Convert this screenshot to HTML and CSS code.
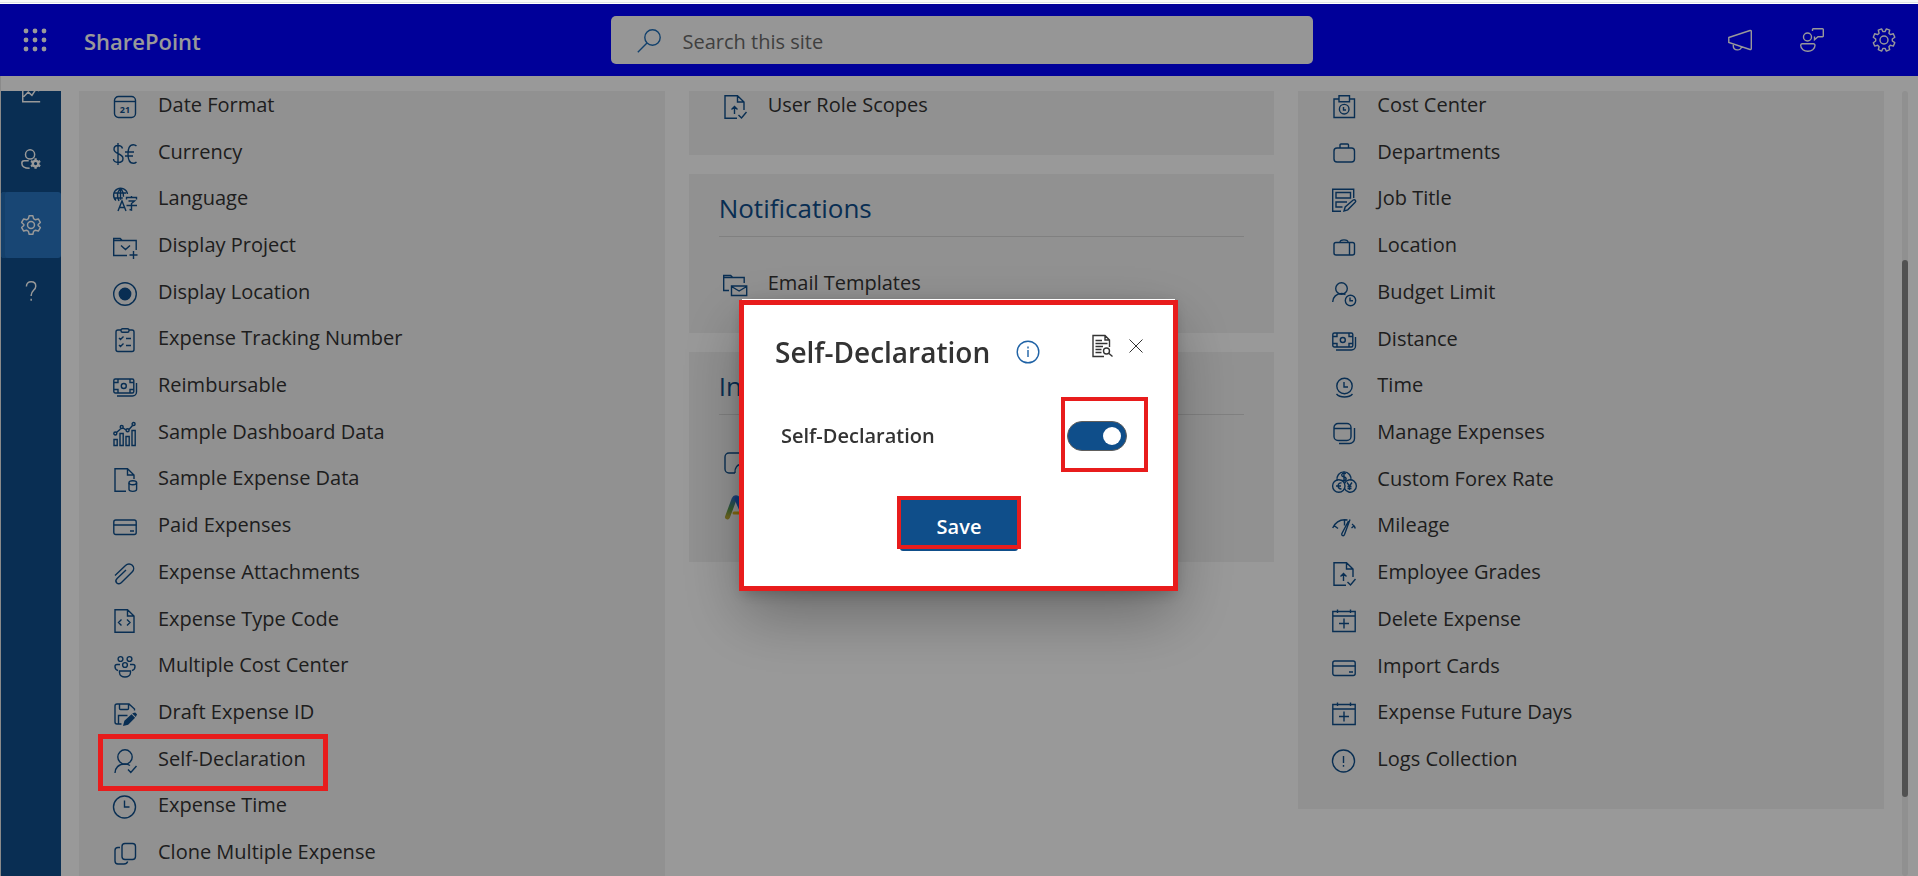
FILE: index.html
```
<!DOCTYPE html>
<html lang="en">
<head>
<meta charset="utf-8">
<title>SharePoint - Settings</title>
<link rel="stylesheet" href="styles.css">
</head>
<body>
<svg class="sprite" aria-hidden="true">
  <defs>
    <linearGradient id="leg" x1="0" y1="1" x2="0" y2="0"><stop offset="0" stop-color="#b8a832"/><stop offset=".4" stop-color="#5a9a4a"/><stop offset="1" stop-color="#2e70c8"/></linearGradient>
  </defs>
  <symbol id="currency" viewBox="0 0 24 24"><path d="M5 1v22M9.500 6.500C9 4.300 7 3.500 5 3.500c-2.500 0-4 1.500-4 3.800C1 12.500 10 11 10 16.500c0 2.500-2 4-5 4-2.500 0-4.500-1.500-4.500-3.500M23.500 4c-1-1-2-1.300-3.200-1.300-4 0-5.300 4-5.300 9.300s1.500 9.300 5.300 9.300c1.200 0 2.200-.3 3.200-1.300M12 10h9M12 14h8"/></symbol>
  <symbol id="language" viewBox="0 0 24 24"><path d="M3 12.500A7 7 0 1 1 14.500 6M1 5h12M.8 10h9M7.500.8v11M7.500.8C4 4 4 9 6 13M7.500.8c2.500 2 3 4 3 8M5 23l4-10 4 10M6.500 19.500h5M13.500 11.500V9.500h10v2M18.500 8v1.500M15.500 13h6l-3 2.500v6.500l-2-.5M13.500 17.500h10.500"/></symbol>
  <symbol id="project" viewBox="0 0 24 24"><path d="M14 20.500H.7V3.500h6.500l2 2h14V15M.7 5.500h8.500M8 10.500l4.500 4 4.500-4M20.500 16v8M16.500 20h8"/></symbol>
  <symbol id="radio" viewBox="0 0 24 24"><circle cx="12" cy="12" r="11.300"/><circle class="solid" cx="12" cy="12" r="5.700"/></symbol>
  <symbol id="checklist" viewBox="0 0 24 24"><path d="M8 2H5a2 2 0 0 0-2 2v17.500a2 2 0 0 0 2 2h14a2 2 0 0 0 2-2V4a2 2 0 0 0-2-2h-3"/><rect x="8" y=".7" width="8" height="3.500" rx="1.500"/><path d="M6 10l1.500 1.500L10.500 8.500M6 17l1.500 1.500 3-3M13 10.500h5M13 17.500h5"/></symbol>
  <symbol id="money" viewBox="0 0 24 24"><rect x=".8" y="4" width="20" height="14" rx="1.500"/><circle cx="10.800" cy="11" r="2.500"/><path d="M5 4v3.500H1M17 4v3.500h4M5 18v-3.500H1M17 18v-3.500h4M23.500 8v9a4 4 0 0 1-4 4H4"/></symbol>
  <symbol id="chart" viewBox="0 0 24 24"><path d="M1 17.500h3.200v6H1zM7 11.500h3.200v12H7zM13 14.500h3.200v9H13zM19 8.500h3.200v15H19zM3.500 10.500l4-3.500M10 6l3 1.800M16 7.500l3.500-4"/><circle cx="2.300" cy="11.500" r="1.500"/><circle cx="8.700" cy="5" r="1.500"/><circle cx="14.600" cy="8.300" r="1.500"/><circle cx="20.600" cy="2" r="1.500"/></symbol>
  <symbol id="docdata" viewBox="0 0 24 24"><path d="M13 23.300H2V.7h12.500L21 7v4M14.500.7V7H21"/><ellipse cx="19.800" cy="14.800" rx="3.800" ry="2"/><path d="M16 14.800v6.500c0 2.700 7.600 2.700 7.600 0v-6.500"/></symbol>
  <symbol id="card" viewBox="0 0 24 24"><rect x=".8" y="5" width="22.400" height="14.500" rx="2"/><path d="M.8 10h22.400M17 16h4"/></symbol>
  <symbol id="clip" viewBox="0 0 24 24"><path d="M2 13.500L12.500 3.500c2-2 5-2 6.800-.2 1.900 1.900 1.800 4.700-.2 6.700L8.500 20.500c-1.500 1.500-3.500 1.600-4.700.4-1.200-1.200-1.100-3.100.3-4.500L13 8"/></symbol>
  <symbol id="code" viewBox="0 0 24 24"><path d="M2 .7h12.500L21 7v16.300H2zM14.500.7V7H21M8.500 10.500l-3 3 3 3M14 10.500l3 3-3 3"/></symbol>
  <symbol id="people" viewBox="0 0 24 24"><circle cx="7.500" cy="4" r="2.400"/><circle cx="16.500" cy="4" r="2.400"/><circle cx="12" cy="10" r="2.400"/><path d="M6.500 16h11v1.500c0 6-11 6-11 0zM7 9.500H4a2 2 0 0 0-2 2c0 2 1 3.500 3 4M17 9.500h3a2 2 0 0 1 2 2c0 2-1 3.500-3 4"/></symbol>
  <symbol id="draft" viewBox="0 0 24 24"><path d="M8.500 22H4a2 2 0 0 1-2-2V4a2 2 0 0 1 2-2h12l5.500 5v1.500M6.500 2v4.500a1 1 0 0 0 1 1h7a1 1 0 0 0 1-1V2M5.500 22v-8.500h9"/><path class="solid" d="M11 23l1-3.800 6.500-6 2.600 2.600-6.300 6.200zM20.500 11.700l1.500-.5 1.200 1.200-.6 1.400z"/></symbol>
  <symbol id="selfdecl" viewBox="0 0 24 24"><circle cx="12" cy="8" r="7.200"/><path d="M2 24c0-5 3.500-9 10-9 2 0 3.500.5 5 1.500M15 20.500l2.800 3L23.500 17"/></symbol>
  <symbol id="clock" viewBox="0 0 24 24"><circle cx="11.500" cy="12" r="11"/><path d="M11.500 5.500V12h5"/></symbol>
  <symbol id="clone" viewBox="0 0 24 24"><rect x="9" y="1.500" width="13.500" height="16" rx="3"/><path d="M7 5.500H5a3 3 0 0 0-3 3V19a3 3 0 0 0 3 3h6c2 0 3.200-1 3.700-2.500"/></symbol>
  <symbol id="docup" viewBox="0 0 24 24"><path d="M14 23.300H2V.7h12.500L21 7v8M14.500.7V7H21M11.500 19v-7M8.500 14.500l3-3 3 3M15.500 20l3 3 5-6"/></symbol>
  <symbol id="mail" viewBox="0 0 24 24"><path d="M6 17.500H.7V2.500h7l2 2h11.500V10M.7 4.500h9"/><path d="M8.500 13h15.200v9.500H8.500zM8.500 13.500l7.600 4.500 7.600-4.500"/></symbol>
  <symbol id="note" viewBox="0 0 24 24"><path d="M22 11V6a4 4 0 0 0-4-4H6a4 4 0 0 0-4 4v12a4 4 0 0 0 4 4h6M12 22c-.5-5 2-9 8-9"/></symbol>
  <symbol id="brand" viewBox="0 0 28 28"><path class="brand-left" d="M4.500 24L11 6.500c1-2.500 3-2.500 4 0"/><path class="brand-right" d="M14 6l8 18"/><path class="brand-bar" d="M11 20h8"/></symbol>
  <symbol id="costcenter" viewBox="0 0 24 24"><path d="M6.500 4H2v18.500h20.500V4H18M7 .7h10.500v6H7z"/><circle cx="12.200" cy="14.200" r="4.800"/><path d="M11.500 12v3H14"/></symbol>
  <symbol id="bag" viewBox="0 0 24 24"><rect x="2" y="6" width="20.500" height="14" rx="3"/><path d="M8 6V3a1 1 0 0 1 1-1h6.500a1 1 0 0 1 1 1v3"/></symbol>
  <symbol id="job" viewBox="0 0 24 24"><path d="M9 23.300H.7V1.200h21V10M4 4.500h14.500V10H4zM15 14H4v5h6.500M12 23l1.200-4 8-7c1.500-1 3.500.8 2 2.300l-7.500 7.500z"/></symbol>
  <symbol id="case" viewBox="0 0 24 24"><rect x="2" y="7.500" width="20.500" height="12.500" rx="2"/><path d="M17.500 7.500V20M8 7.500C8 4 16 4 16 7.500"/></symbol>
  <symbol id="budget" viewBox="0 0 24 24"><circle cx="9.500" cy="6.500" r="5.800"/><path d="M.7 20c0-5 4-8.500 8.800-8.500 1.500 0 3 .5 4 1"/><circle cx="18.500" cy="18.500" r="5.200"/><path d="M18 15.500v3.300h3"/></symbol>
  <symbol id="time" viewBox="0 0 24 24"><circle cx="12.500" cy="11" r="7.700"/><path d="M12 7v5h4M4.500 19c3.500 4 12.500 4 16 0"/></symbol>
  <symbol id="manage" viewBox="0 0 24 24"><rect x="2" y="1.500" width="17" height="17" rx="4"/><path d="M2 6.500h17M22.500 6v10.500a5 5 0 0 1-5 5H7"/></symbol>
  <symbol id="forex" viewBox="0 0 24 24"><path d="M5.200 11.500a7 7 0 1 1 13.600 0"/><circle cx="6.800" cy="17" r="6.200"/><path d="M12.500 14.500a6.200 6.200 0 1 1 0 5M14 4.700c-3-1.500-5 .3-4 2.100.8 1.200 4 .8 4.200 3 .1 1.700-2.500 2.500-4.600 1.200M12 2.800v10M9.500 14c-4-1-5 5.500 0 6M4 17h5M15 13.500l2.500 3.500 2.500-3.500M17.500 17v4M15.500 17.500h4M15.500 19.500h4"/></symbol>
  <symbol id="mileage" viewBox="0 0 24 24"><path d="M.7 13C4 6 9 4 15.500 5M2 10.500l4 3M12.500 4.500v6M18 4.500l-5.500 15c-.8 2-3.300 1.200-2.700-.8L16.500 6M20 9c1.500 1 2.700 2.500 3.300 4.500M19.500 13l3-2.500"/></symbol>
  <symbol id="calplus" viewBox="0 0 24 24"><path d="M.8 2.500h22.400v20H.8zM.8 7h22.400M5.500.5V4M18.500.5V4M12 9.500v10M7 14.500h10"/></symbol>
  <symbol id="alert" viewBox="0 0 24 24"><circle cx="11.500" cy="12" r="11"/><path d="M11.500 7v7M11.500 16v1.800"/></symbol>
  <symbol id="trend" viewBox="0 0 24 24"><path d="M3 1v20.500h19M4 16l5-5 4 3.500 4-6 4 1"/></symbol>
  <symbol id="usergear" viewBox="0 0 24 24"><circle cx="11" cy="7" r="5"/><path d="M9.500 14H4.500a2.500 2.500 0 0 0-2.500 2.500c0 4 4 5.500 8.500 5.500"/><circle class="cog" cx="17" cy="17" r="3"/><path class="cog" d="M17 11.300v3M17 19.700v3M12 14.200l2.600 1.500M19.400 18.300l2.600 1.500M12 19.800l2.600-1.500M19.400 15.700l2.600-1.500"/></symbol>
  <symbol id="gear6" viewBox="0 0 24 24"><circle cx="12" cy="12" r="3.800"/><path stroke-linejoin="round" d="M10 1.800h4l.8 3.300 2 1.200 3.200-.9 2.200 3.800-2.400 2.200v1.200l2.400 2.200-2.200 3.800-3.200-.9-2 1.200-.8 3.300h-4l-.8-3.300-2-1.200-3.200.9-2.200-3.800 2.400-2.200v-1.200L1.800 9.200 4 5.400l3.200.9 2-1.200z"/></symbol>
  <symbol id="help" viewBox="0 0 24 24"><path d="M7 7c0-3 2-5 5.200-5 3 0 5 2 5 4.700 0 4.300-5 4.800-5 9.800v1M12.200 20.500v2"/></symbol>
  <symbol id="megaphone" viewBox="0 0 24 24"><path d="M.8 9.500L22 2.500c.8-.2 1.300.2 1.300 1v17c0 .8-.5 1.200-1.300 1L.8 14.500zM5.300 16v2c0 5 8 5 8 1"/></symbol>
  <symbol id="feedback" viewBox="0 0 24 24"><circle cx="7.500" cy="9" r="4"/><path d="M2 15.800h11.500a1.500 1.500 0 0 1 1.500 1.500c0 8-14.300 8-14.300 0A1.500 1.500 0 0 1 2 15.800zM12.500 3V1.500A.8.800 0 0 1 13.300.700h9.200a.8.800 0 0 1 .8.800V8a.8.800 0 0 1-.8.800H18l-3.500 3V8.500"/></symbol>
  <symbol id="gear8" viewBox="0 0 24 24"><circle cx="12" cy="12" r="4"/><path stroke-linejoin="round" d="M9.600.9l1.400 2.700h2L14.400.9l3.300 1.300-.8 3 1.400 1.400 3-.8 1.500 3.400L20.300 11v2l2.500 1.700-1.500 3.400-3-.8-1.400 1.400.8 3-3.300 1.400-1.400-2.700h-2l-1.400 2.700-3.300-1.400.8-3-1.400-1.400-3 .8-1.400-3.400L3.700 13v-2L1.300 9.200l1.400-3.400 3 .8 1.400-1.400-.8-3z"/></symbol>
  <symbol id="search" viewBox="0 0 24 24"><circle cx="15.500" cy="8.500" r="7.700"/><path d="M10 14L.8 23.200"/></symbol>
  <symbol id="info" viewBox="0 0 24 24"><circle cx="12" cy="12" r="10.800"/><path d="M12 10v7M12 6.500v2"/></symbol>
  <symbol id="docsearch" viewBox="0 0 24 24"><path d="M14 22.500H3V1.500h12L19.500 6v7M15 1.500V6h4.500M5.500 6.500H12M5.500 9.500h12M5.500 12.500H13M5.500 15.500h6M5.500 18.500h6"/><circle cx="16.500" cy="17" r="3"/><path d="M18.700 19.200l3.800 3.300"/></symbol>
  <symbol id="close" viewBox="0 0 14 14"><path d="M.5.5l13 13M13.500.5l-13 13"/></symbol>
</svg>

<div class="top-edge"></div>
<header class="suite">
  <div class="suite-brand">
    <button class="icon-btn" aria-label="App launcher"><svg class="waffle" viewBox="0 0 24 24"><g><circle cx="3" cy="3" r="2.400"/><circle cx="12" cy="3" r="2.400"/><circle cx="21" cy="3" r="2.400"/><circle cx="3" cy="12" r="2.400"/><circle cx="12" cy="12" r="2.400"/><circle cx="21" cy="12" r="2.400"/><circle cx="3" cy="21" r="2.400"/><circle cx="12" cy="21" r="2.400"/><circle cx="21" cy="21" r="2.400"/></g></svg></button>
    <a class="suite-name" href="#">SharePoint</a>
  </div>
  <form class="search" role="search">
    <svg class="icon"><use href="#search"/></svg>
    <input class="search-input" type="search" placeholder="Search this site" aria-label="Search this site">
  </form>
  <div class="suite-actions">
    <button class="icon-btn" aria-label="Announcements"><svg class="icon"><use href="#megaphone"/></svg></button>
    <button class="icon-btn" aria-label="Feedback"><svg class="icon"><use href="#feedback"/></svg></button>
    <button class="icon-btn" aria-label="Settings"><svg class="icon"><use href="#gear8"/></svg></button>
  </div>
</header>

<div class="shell">
  <nav class="rail" aria-label="Sections">
    <div class="rail-items">
      <a class="rail-item" href="#" aria-label="Reports"><svg class="icon"><use href="#trend"/></svg></a>
      <a class="rail-item" href="#" aria-label="Users"><svg class="icon"><use href="#usergear"/></svg></a>
      <a class="rail-item rail-item-active" href="#" aria-label="Settings"><svg class="icon"><use href="#gear6"/></svg></a>
      <a class="rail-item" href="#" aria-label="Help"><svg class="icon"><use href="#help"/></svg></a>
    </div>
  </nav>
  <main class="content">
    <div class="columns">
      <section class="panel panel-fill">
        <ul class="list list-long">
          <li><a class="item" href="#"><svg class="icon" viewBox="0 0 24 24"><rect x="1.500" y="1.500" width="21" height="21" rx="4"/><path d="M1.500 6.500h21"/><text class="glyph" x="12" y="17.500" text-anchor="middle">21</text></svg>Date Format</a></li>
          <li><a class="item" href="#"><svg class="icon"><use href="#currency"/></svg>Currency</a></li>
          <li><a class="item" href="#"><svg class="icon"><use href="#language"/></svg>Language</a></li>
          <li><a class="item" href="#"><svg class="icon"><use href="#project"/></svg>Display Project</a></li>
          <li><a class="item" href="#"><svg class="icon"><use href="#radio"/></svg>Display Location</a></li>
          <li><a class="item" href="#"><svg class="icon"><use href="#checklist"/></svg>Expense Tracking Number</a></li>
          <li><a class="item" href="#"><svg class="icon"><use href="#money"/></svg>Reimbursable</a></li>
          <li><a class="item" href="#"><svg class="icon"><use href="#chart"/></svg>Sample Dashboard Data</a></li>
          <li><a class="item" href="#"><svg class="icon"><use href="#docdata"/></svg>Sample Expense Data</a></li>
          <li><a class="item" href="#"><svg class="icon"><use href="#card"/></svg>Paid Expenses</a></li>
          <li><a class="item" href="#"><svg class="icon"><use href="#clip"/></svg>Expense Attachments</a></li>
          <li><a class="item" href="#"><svg class="icon"><use href="#code"/></svg>Expense Type Code</a></li>
          <li><a class="item" href="#"><svg class="icon"><use href="#people"/></svg>Multiple Cost Center</a></li>
          <li><a class="item" href="#"><svg class="icon"><use href="#draft"/></svg>Draft Expense ID</a></li>
          <li class="marked"><a class="item" href="#"><svg class="icon"><use href="#selfdecl"/></svg>Self-Declaration</a><span class="mark mark-item"></span></li>
          <li><a class="item" href="#"><svg class="icon"><use href="#clock"/></svg>Expense Time</a></li>
          <li><a class="item" href="#"><svg class="icon"><use href="#clone"/></svg>Clone Multiple Expense</a></li>
        </ul>
      </section>
      <div class="stack">
        <section class="panel">
          <ul class="list">
            <li><a class="item" href="#"><svg class="icon"><use href="#docup"/></svg>User Role Scopes</a></li>
          </ul>
        </section>
        <section class="panel">
          <h2 class="panel-title">Notifications</h2>
          <ul class="list">
            <li><a class="item" href="#"><svg class="icon"><use href="#mail"/></svg>Email Templates</a></li>
          </ul>
        </section>
        <section class="panel">
          <h2 class="panel-title">Integrations</h2>
          <ul class="list list-pair">
            <li><a class="item" href="#" aria-label="Notes"><svg class="icon"><use href="#note"/></svg></a></li>
            <li><a class="item" href="#" aria-label="Assistant"><svg class="icon icon-brand"><use href="#brand"/></svg></a></li>
          </ul>
        </section>
      </div>
      <section class="panel">
        <ul class="list list-medium">
          <li><a class="item" href="#"><svg class="icon"><use href="#costcenter"/></svg>Cost Center</a></li>
          <li><a class="item" href="#"><svg class="icon"><use href="#bag"/></svg>Departments</a></li>
          <li><a class="item" href="#"><svg class="icon"><use href="#job"/></svg>Job Title</a></li>
          <li><a class="item" href="#"><svg class="icon"><use href="#case"/></svg>Location</a></li>
          <li><a class="item" href="#"><svg class="icon"><use href="#budget"/></svg>Budget Limit</a></li>
          <li><a class="item" href="#"><svg class="icon"><use href="#money"/></svg>Distance</a></li>
          <li><a class="item" href="#"><svg class="icon"><use href="#time"/></svg>Time</a></li>
          <li><a class="item" href="#"><svg class="icon"><use href="#manage"/></svg>Manage Expenses</a></li>
          <li><a class="item" href="#"><svg class="icon"><use href="#forex"/></svg>Custom Forex Rate</a></li>
          <li><a class="item" href="#"><svg class="icon"><use href="#mileage"/></svg>Mileage</a></li>
          <li><a class="item" href="#"><svg class="icon"><use href="#docup"/></svg>Employee Grades</a></li>
          <li><a class="item" href="#"><svg class="icon"><use href="#calplus"/></svg>Delete Expense</a></li>
          <li><a class="item" href="#"><svg class="icon"><use href="#card"/></svg>Import Cards</a></li>
          <li><a class="item" href="#"><svg class="icon"><use href="#calplus"/></svg>Expense Future Days</a></li>
          <li><a class="item" href="#"><svg class="icon"><use href="#alert"/></svg>Logs Collection</a></li>
        </ul>
      </section>
    </div>
  </main>
  <div class="scroll-track"><div class="scroll-thumb"></div></div>
</div>

<div class="overlay">
  <section class="dialog" role="dialog" aria-labelledby="dialog-title">
    <header class="dialog-head">
      <h1 class="dialog-title" id="dialog-title">Self-Declaration</h1>
      <button class="icon-btn dialog-info" aria-label="Information"><svg class="icon"><use href="#info"/></svg></button>
      <div class="dialog-tools">
        <button class="icon-btn" aria-label="View log"><svg class="icon"><use href="#docsearch"/></svg></button>
        <button class="icon-btn" aria-label="Close"><svg class="icon icon-close"><use href="#close"/></svg></button>
      </div>
    </header>
    <div class="field">
      <label class="field-label" for="self-declaration">Self-Declaration</label>
      <span class="marked"><input class="toggle" id="self-declaration" type="checkbox" role="switch" checked><span class="mark mark-toggle"></span></span>
    </div>
    <div class="dialog-foot">
      <span class="marked"><button class="save">Save</button><span class="mark mark-save"></span></span>
    </div>
    <span class="mark mark-dialog"></span>
  </section>
</div>
</body>
</html>
```

FILE: styles.css
```
:root {
  --blue: #0f4e8a;
  --red: #e81c1c;
  --ink: #333333;
}

* { box-sizing: border-box; }

body {
  margin: 0;
  height: 100vh;
  display: flex;
  flex-direction: column;
  overflow: hidden;
  background: #ffffff;
  color: var(--ink);
  font-family: "Segoe UI", "Open Sans", "Noto Sans", sans-serif;
  font-size: 20px;
}

a { color: inherit; text-decoration: none; }
button, input { font: inherit; }

.sprite { position: absolute; width: 0; height: 0; }

.icon {
  width: 24px;
  height: 24px;
  flex: none;
  display: block;
  overflow: visible;
  fill: none;
  stroke: currentColor;
  stroke-width: 1.4;
}
.sprite symbol { overflow: visible; }
.solid { fill: currentColor; }
.glyph { fill: currentColor; stroke: none; font-size: 9px; font-weight: 700; }
.cog { stroke-width: 2.5; }
.icon-brand { width: 28px; height: 28px; stroke-width: 5; stroke-linecap: round; }
.brand-left { stroke: url(#leg); }
.brand-right { stroke: #2560c8; }
.brand-bar { stroke: #d8b020; stroke-width: 3; }

.icon-btn {
  border: 0;
  padding: 0;
  background: none;
  color: inherit;
  display: block;
}

.top-edge {
  flex: none;
  height: 4px;
  background: #f6f8f9;
  border-bottom: 1px solid #ffffff;
  box-shadow: inset 0 -1px #dde3e6;
}

.suite {
  flex: none;
  height: 72px;
  padding: 0 18px 0 23px;
  display: grid;
  grid-template-columns: 1fr minmax(300px, 702px) 1fr;
  align-items: center;
  background: #0000ff;
  color: #ffffff;
}
.suite-brand { display: flex; align-items: center; gap: 37px; }
.waffle { display: block; width: 24px; height: 24px; fill: currentColor; }
.suite-name { padding-top: 2px; font-size: 22px; font-weight: 600; }
.suite-actions { padding-right: 4px; display: flex; justify-content: flex-end; gap: 48px; }

.search {
  height: 48px;
  padding: 2px 26px 0;
  display: flex;
  align-items: center;
  gap: 22px;
  border-radius: 5px;
  background: #fbfbfb;
  color: #1f6db5;
}
.search-input {
  flex: 1;
  min-width: 0;
  padding: 0;
  border: 0;
  outline: 0;
  background: none;
}
.search-input::placeholder { color: #6a6a6a; opacity: 1; }

.shell {
  flex: 1;
  min-height: 0;
  padding: 15px 10px 0 0;
  display: flex;
  border-left: 1px solid #e6e6e6;
}

.rail {
  width: 60px;
  flex: none;
  overflow: hidden;
  background: var(--blue);
  color: #ffffff;
}
.rail-items { margin-top: -31px; }
.rail-item {
  height: 66px;
  display: grid;
  place-items: center;
  border-radius: 3px;
}
.rail-item-active { background: #2876c1; box-shadow: inset 4px 0 #226bb2; }
.rail-item .icon { width: 22px; height: 22px; stroke-width: 1.6; }

.content { flex: 1; min-width: 0; padding: 0 18px; overflow: hidden; }
.columns {
  min-height: 100%;
  margin-top: -8px;
  display: grid;
  grid-template-columns: repeat(3, minmax(0, 1fr));
  align-items: start;
  gap: 24px;
}
.stack { display: grid; gap: 19px; }

.panel { padding: 0 30px 25px; background: #f2f2f2; }
.panel-fill { align-self: stretch; }
.panel-title {
  margin: 0 0 24px;
  padding: 16px 0 10px;
  border-bottom: 1px solid #d6d6d6;
  color: var(--blue);
  font-size: 26px;
  font-weight: 400;
  line-height: 36px;
}
.list {
  margin: 0;
  padding: 0 4px;
  display: grid;
  grid-auto-rows: 1fr;
  min-height: 47px;
  list-style: none;
}
.list-long { min-height: 794px; }
.list-medium { min-height: 701px; }
.list-pair { min-height: 98px; padding-bottom: 6px; }
.item {
  height: 100%;
  padding-bottom: 3px;
  display: flex;
  align-items: center;
  gap: 21px;
  line-height: 28px;
}
.item .icon { margin-top: 4px; color: var(--blue); }
.item .icon-brand { margin-top: 0; }

.scroll-track {
  width: 6px;
  flex: none;
  border-radius: 3px;
  background: #f0f0f0;
  display: grid;
  grid-template-rows: 169fr 537fr 79fr;
}
.scroll-thumb { grid-row: 2; border-radius: 3px; background: #888888; }

.overlay {
  position: fixed;
  z-index: 1;
  inset: 4px 0 0;
  padding: 8px 1px 0 0;
  display: grid;
  place-items: center;
  background: rgba(0, 0, 0, 0.4);
}
.dialog {
  position: relative;
  width: 433px;
  padding: 31px 32px 38px 33px;
  background: #ffffff;
  box-shadow: 0 26px 58px rgba(0, 0, 0, 0.3), 0 5px 14px rgba(0, 0, 0, 0.22);
}
.dialog-head { display: flex; align-items: center; }
.dialog-title { margin: 0; font-size: 28px; font-weight: 600; line-height: 44px; }
.dialog-info { margin-left: 26px; color: #1f62a5; }
.dialog-tools {
  margin-left: auto;
  padding-bottom: 12px;
  display: flex;
  align-items: center;
  gap: 15px;
}
.icon-close { width: 14px; height: 14px; stroke-width: 1; }

.field {
  margin-top: 46px;
  padding: 0 16px 0 6px;
  display: flex;
  align-items: center;
  justify-content: space-between;
}
.field-label { font-weight: 600; line-height: 32px; }

.toggle {
  appearance: none;
  display: block;
  width: 60px;
  height: 30px;
  margin: 0;
  padding: 5px;
  border: 1px solid #605e5c;
  border-radius: 15px;
  background: var(--blue);
}
.toggle::before {
  content: "";
  display: block;
  width: 18px;
  height: 18px;
  border-radius: 50%;
  background: #ffffff;
}
.toggle:checked::before { margin-left: auto; margin-right: 0; }

.dialog-foot { margin-top: 47px; display: flex; justify-content: center; }
.save {
  display: block;
  width: 118px;
  height: 52px;
  padding: 2px 0 0;
  border: 0;
  border-radius: 3px;
  background: var(--blue);
  color: #ffffff;
  font-weight: 600;
}

.marked { position: relative; }
.mark {
  position: absolute;
  border: 4px solid var(--red);
  pointer-events: none;
}
.mark-item {
  z-index: 2;
  inset: -3px auto -7px -15px;
  width: 230px;
  border-width: 5px;
}
.mark-toggle { inset: -24px -21px -21px -6px; }
.mark-save { inset: -3px -3px 2px; }
.mark-dialog { inset: 1px -3px -2px; border-width: 5px; }
```
